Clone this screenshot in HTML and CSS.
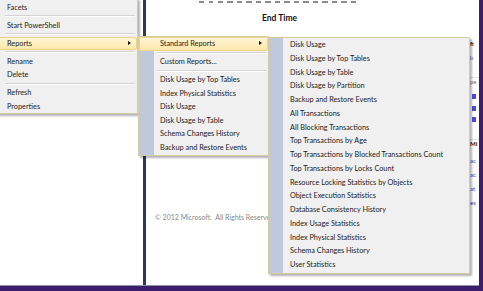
FILE: index.html
```html
<!DOCTYPE html>
<html lang="en">
<head>
    <meta charset="UTF-8">
    <title>Reports menu</title>
    <link rel="stylesheet" href="styles.css">
</head>
<body>
    <div class="screen">
        <div class="explorer"></div>
        <div class="report">
            <div class="report-main">
                <div class="dashes"></div>
                <div class="heading">End Time</div>
                <div class="copyright">© 2012 Microsoft.&nbsp; All Rights Reserved</div>
            </div>
            <div class="side">
                <div class="side-bold s1">fi</div>
                <div class="side-link s2">lı</div>
                <div class="side-gray s3">pe</div>
                <div class="side-box s4"></div>
                <div class="side-box s5"></div>
                <div class="side-box s6"></div>
                <div class="side-bold s7">Mi</div>
                <div class="side-link s8">ac</div>
                <div class="side-link s9">ac</div>
                <div class="side-link s9">at</div>
                <div class="side-link s9">es</div>
            </div>
        </div>
    </div>

    <!-- Object explorer context menu -->
    <div class="menu menu-main">
        <div class="item">Facets</div>
        <div class="sep"></div>
        <div class="item">Start PowerShell</div>
        <div class="sep"></div>
        <div class="item active">Reports<span class="arrow"></span></div>
        <div class="sep"></div>
        <div class="item">Rename</div>
        <div class="item">Delete</div>
        <div class="sep"></div>
        <div class="item">Refresh</div>
        <div class="item">Properties</div>
    </div>

    <div class="menu menu-std">
        <div class="item active">Standard Reports<span class="arrow"></span></div>
        <div class="sep"></div>
        <div class="item">Custom Reports...</div>
        <div class="sep"></div>
        <div class="item">Disk Usage by Top Tables</div>
        <div class="item">Index Physical Statistics</div>
        <div class="item">Disk Usage</div>
        <div class="item">Disk Usage by Table</div>
        <div class="item">Schema Changes History</div>
        <div class="item">Backup and Restore Events</div>
    </div>

    <div class="menu menu-rep">
        <div class="item">Disk Usage</div>
        <div class="item">Disk Usage by Top Tables</div>
        <div class="item">Disk Usage by Table</div>
        <div class="item">Disk Usage by Partition</div>
        <div class="item">Backup and Restore Events</div>
        <div class="item">All Transactions</div>
        <div class="item">All Blocking Transactions</div>
        <div class="item">Top Transactions by Age</div>
        <div class="item">Top Transactions by Blocked Transactions Count</div>
        <div class="item">Top Transactions by Locks Count</div>
        <div class="item">Resource Locking Statistics by Objects</div>
        <div class="item">Object Execution Statistics</div>
        <div class="item">Database Consistency History</div>
        <div class="item">Index Usage Statistics</div>
        <div class="item">Index Physical Statistics</div>
        <div class="item">Schema Changes History</div>
        <div class="item">User Statistics</div>
    </div>
</body>
</html>
```

FILE: styles.css
```css
/* SSMS context menu over a report window */
body {
    margin: 0;
    width: 483px;
    height: 291px;
    position: relative;
    overflow: hidden;
    background-color: #3b1d6b;
    font-family: 'Lato', 'Open Sans', sans-serif;
    color: #222222;
}

.screen {
    display: flex;
    width: 479px;
    height: 285px;
    background-color: #ffffff;
    border-bottom: 1px solid #8e93ad;
}

.explorer {
    width: 143px;
    flex-shrink: 0;
    border-right: 3px solid #2b3a5c;
}

.report {
    flex: 1;
    display: flex;
}

.report-main {
    flex: 1;
}

.dashes {
    margin: 1px 0 0 53px;
    width: 161px;
    height: 2px;
    background: repeating-linear-gradient(90deg, #8c8c8c 0 5px, transparent 5px 9.5px);
}

.heading {
    margin: 10px 0 0 116px;
    font-size: 8.5px;
    font-weight: bold;
    color: #111111;
}

.copyright {
    margin: 190px 0 0 9px;
    font-size: 7px;
    color: #8a8a8a;
    white-space: nowrap;
}

.side {
    width: 9px;
    padding-left: 1px;
    font-size: 6px;
    line-height: 8px;
    white-space: nowrap;
}

.side-bold {
    font-weight: bold;
    color: #111111;
}

.side-link {
    color: #3b3bd8;
}

.side-gray {
    color: #777777;
}

.side-box {
    width: 4px;
    height: 5px;
    margin-left: 2px;
    background-color: #4a4ae0;
}

.s1 { margin-top: 40px; }
.s2 { margin-top: 6px; }
.s3 { margin-top: 15px; border-top: 1px solid #e4e4e4; }
.s4 { margin-top: 8px; }
.s5 { margin-top: 7px; }
.s6 { margin-top: 6px; }
.s7 { margin-top: 17px; border-top: 1px solid #e4e4e4; }
.s8 { margin-top: 9px; }
.s9 { margin-top: 6px; }

/* Menus */
.menu {
    position: absolute;
    box-sizing: border-box;
    background-color: #f0f0f0;
    border: 1px solid #d6cca4;
    box-shadow: 2px 2px 2px rgba(0, 0, 0, 0.3);
    font-size: 7.3px;
}

.item {
    position: relative;
    height: 13.5px;
    line-height: 13.5px;
    white-space: nowrap;
}

.item.active {
    background: linear-gradient(#fff6da, #fde7a4);
    box-shadow: inset 0 0 0 1px #ecd48c;
    border-radius: 2px;
}

.arrow {
    position: absolute;
    top: 4px;
    width: 0;
    height: 0;
    border-left: 3px solid #111111;
    border-top: 2.5px solid transparent;
    border-bottom: 2.5px solid transparent;
}

.sep {
    height: 0;
    margin: 1.25px 2px 1.25px 7px;
    border-top: 1px solid #d4d4d4;
    border-bottom: 1px solid #ffffff;
}

.menu-main {
    left: -3px;
    top: -2px;
    width: 141px;
    padding-top: 1.5px;
}

.menu-main .item {
    padding-left: 9px;
}

.menu-main .arrow {
    left: 130px;
}

.menu-std {
    left: 138px;
    top: 36px;
    width: 131px;
    padding-bottom: 1px;
    background: linear-gradient(90deg, #bfc9da 0 15px, #f0f0f0 15px);
}

.menu-std .item {
    padding-left: 21px;
}

.menu-std .sep {
    margin-left: 18px;
}

.menu-std .arrow {
    left: 120px;
}

.menu-rep {
    left: 268px;
    top: 37px;
    width: 202px;
    padding-bottom: 1px;
    background: linear-gradient(90deg, #bfc9da 0 14px, #f0f0f0 14px);
}

.menu-rep .item {
    height: 13.75px;
    line-height: 13.75px;
    padding-left: 21px;
}
```
